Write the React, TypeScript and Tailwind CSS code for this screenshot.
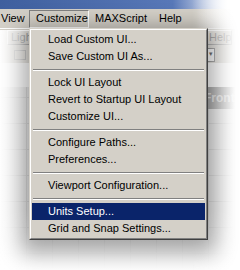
const ITEMS: (string | null)[] = [
  "Load Custom UI...",
  "Save Custom UI As...",
  null,
  "Lock UI Layout",
  "Revert to Startup UI Layout",
  "Customize UI...",
  null,
  "Configure Paths...",
  "Preferences...",
  null,
  "Viewport Configuration...",
  null,
  "Units Setup...",
  "Grid and Snap Settings...",
];

const ACTIVE = "Units Setup...";

export default function App() {
  return (
    <div className="relative w-[240px] h-[270px] overflow-hidden bg-white font-['Liberation_Sans',Arial,sans-serif] text-[11px] text-black">
      {/* title bar */}
      <div className="h-[9px] bg-[linear-gradient(to_right,#3f5f9e_0%,#5878b8_72%,#ffffff_95%)]" />

      {/* menu bar */}
      <div className="flex h-[20px] items-center border-b border-white bg-[linear-gradient(to_right,#d4d0c8_82%,#ffffff_97%)]">
        <span className="w-[29px] pl-px">View</span>
        <span className="flex h-[18px] w-[60px] items-center border border-b-white border-l-[#808080] border-r-white border-t-[#808080] pl-[6px]">
          Customize
        </span>
        <span className="ml-[6px]">MAXScript</span>
        <span className="ml-[12px]">Help</span>
      </div>

      {/* toolbars */}
      <div className="flex h-[17px] items-center bg-[#d4d0c8]">
        <span className="ml-[7px] flex h-[15px] w-[30px] items-center border border-b-[#808080] border-l-white border-r-[#808080] border-t-white bg-[#c8c4bc] pl-[3px] text-[#555]">
          Ligh
        </span>
        <span className="ml-auto mr-[8px] flex h-[15px] w-[26px] items-center border border-b-[#808080] border-l-white border-r-[#808080] border-t-white pl-[2px] text-[#666]">
          Help
        </span>
      </div>
      <div className="flex h-[17px] items-center bg-[#d4d0c8]">
        <span className="ml-[14px] h-[10px] w-[12px] border border-[#9a9a9a]" />
        <span className="ml-auto mr-[25px] flex h-[14px] w-[9px] items-center justify-center border border-[#606060] bg-white text-[7px]">
          ▾
        </span>
      </div>

      {/* viewport */}
      <div className="relative h-[210px] bg-[#e2e2e2] bg-[linear-gradient(to_right,#c4c4c4_1px,transparent_1px),linear-gradient(to_bottom,#c8c8c8_1px,transparent_1px)] bg-[size:26px_26px] bg-[position:0px_10px]">
        <div className="ml-auto mt-[24px] flex h-[22px] w-[40px] items-center bg-[#7a7a7a] pl-[4px] text-[12px] font-bold text-[#d0d0d0]">
          Front
        </div>
        <div className="absolute left-[193px] top-[178px] h-[40px] w-px bg-[#909090]" />
      </div>

      {/* vignette fades */}
      <div className="pointer-events-none absolute inset-0 bg-[linear-gradient(to_right,transparent_80%,#ffffff_98%)]" />
      <div className="pointer-events-none absolute inset-x-0 bottom-0 top-[30px] bg-[linear-gradient(to_right,#ffffff_0%,rgba(255,255,255,0.7)_8%,transparent_16%)]" />
      <div className="pointer-events-none absolute inset-x-0 bottom-0 h-[60px] bg-[linear-gradient(to_bottom,transparent_0%,rgba(255,255,255,0.85)_60%,#ffffff_100%)]" />

      {/* dropdown menu */}
      <div className="absolute left-[29px] top-[28px] w-[179px] border border-b-[#404040] border-l-[#d4d0c8] border-r-[#404040] border-t-[#d4d0c8] bg-[#d4d0c8] shadow-[0_6px_20px_8px_rgba(0,0,0,0.32)]">
        <div className="border border-b-[#808080] border-l-white border-r-[#808080] border-t-white p-px">
          {ITEMS.map((item, i) =>
            item === null ? (
              <div key={i} className="flex h-[9px] flex-col justify-center px-px">
                <div className="h-px bg-[#808080]" />
                <div className="h-px bg-white" />
              </div>
            ) : (
              <div
                key={i}
                className={
                  item === ACTIVE
                    ? "flex h-[17px] items-center bg-[#0a246a] pl-[16px] text-white"
                    : "flex h-[17px] items-center pl-[16px]"
                }
              >
                {item}
              </div>
            )
          )}
        </div>
      </div>
    </div>
  );
}
